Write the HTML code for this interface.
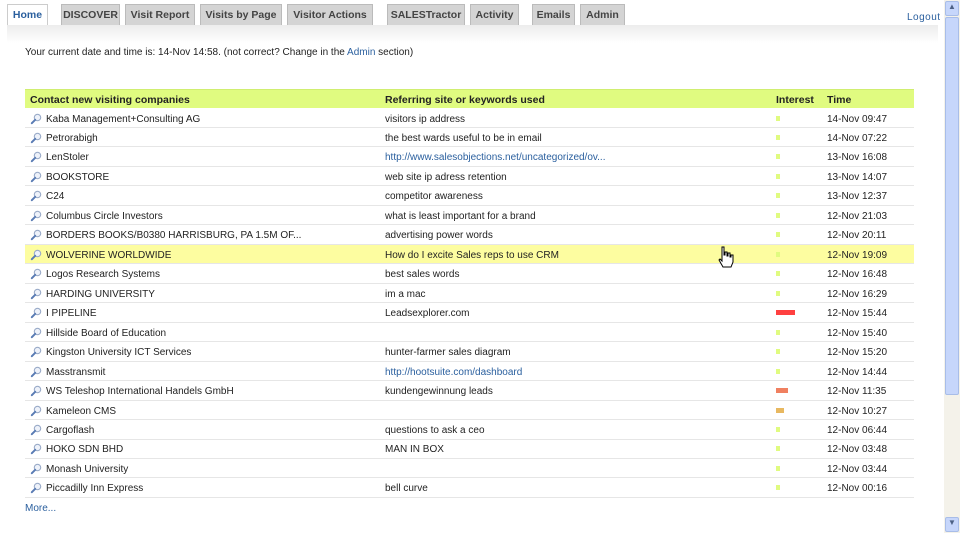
<!DOCTYPE html>
<html><head><meta charset="utf-8"><style>
*{margin:0;padding:0;box-sizing:border-box}
body{width:960px;height:533px;background:#fff;font-family:"Liberation Sans",Arial,sans-serif;font-size:10px;color:#222;position:relative;overflow:hidden}
.tab{position:absolute;top:4px;height:21px;background:#d4d4d4;border:1px solid #bbb;border-bottom:none;font-weight:bold;font-size:10.5px;color:#444;text-align:center;line-height:21px}
.tab.home{background:#fff;color:#2a5f9e;border-color:#ccc}
.band{position:absolute;left:7px;top:25px;width:931px;height:18px;background:linear-gradient(#ececec,#fff)}
a{color:#2a5f9e;text-decoration:none}
.row{position:absolute;left:25px;width:889px;height:19.5px;border-bottom:1px solid #e6e6e6;line-height:21px}
.row span{position:absolute;white-space:nowrap}
.hdr{position:absolute;left:25px;top:89px;width:889px;height:19px;background:#e0fb80;border-top:1px solid #d0ee70;font-weight:bold;font-size:10.5px;line-height:20px}
.hdr span{position:absolute}
.bar{position:absolute;top:7px;height:5px}
.ic{position:absolute;left:5px;top:4px;width:12px;height:12px}
</style></head><body>
<div class="tab home" style="left:7px;width:41px">Home</div>
<div class="tab" style="left:61px;width:59px">DISCOVER</div>
<div class="tab" style="left:125px;width:70px">Visit Report</div>
<div class="tab" style="left:200px;width:82px">Visits by Page</div>
<div class="tab" style="left:287px;width:86px">Visitor Actions</div>
<div class="tab" style="left:387px;width:78px">SALESTractor</div>
<div class="tab" style="left:470px;width:49px">Activity</div>
<div class="tab" style="left:532px;width:43px">Emails</div>
<div class="tab" style="left:580px;width:45px">Admin</div>
<a style="position:absolute;left:907px;top:12px;font-size:10px;letter-spacing:.5px">Logout</a>
<div class="band"></div>
<div style="position:absolute;left:25px;top:47px">Your current date and time is: 14-Nov 14:58. (not correct? Change in the <a>Admin</a> section)</div>
<div class="hdr"><span style="left:5px">Contact new visiting companies</span><span style="left:360px">Referring site or keywords used</span><span style="left:751px">Interest</span><span style="left:802px">Time</span></div>
<div id="rows"></div>
<a style="position:absolute;left:25px;top:503px">More...</a>
<div style="position:absolute;left:944px;top:0;width:16px;height:533px;background:#f4f2ea"></div>
<div style="position:absolute;left:945px;top:1px;width:14px;height:15px;background:#c6d6fb;border:1px solid #a8bde8;border-radius:2px;font-size:8px;text-align:center;color:#4d6185">&#9650;</div>
<div style="position:absolute;left:945px;top:17px;width:14px;height:378px;background:#c6d6fb;border:1px solid #a8bde8;border-radius:2px"></div>
<div style="position:absolute;left:945px;top:517px;width:14px;height:15px;background:#c6d6fb;border:1px solid #a8bde8;border-radius:2px;font-size:8px;text-align:center;color:#4d6185">&#9660;</div>
<svg style="position:absolute;left:718px;top:246px" width="16" height="22" viewBox="0 0 16 22"><path d="M4 1h2v8h1V6h2v4h1V7h2v4h1V9h2v7l-2 5H5L1 14l1-1 2 2z" fill="#fff" stroke="#000" stroke-width="1"/></svg>
<script>
var d=[["Kaba Management+Consulting AG","visitors ip address",0,"14-Nov 09:47"],
["Petrorabigh","the best wards useful to be in email",0,"14-Nov 07:22"],
["LenStoler","http://www.salesobjections.net/uncategorized/ov...",0,"13-Nov 16:08",1],
["BOOKSTORE","web site ip adress retention",0,"13-Nov 14:07"],
["C24","competitor awareness",0,"13-Nov 12:37"],
["Columbus Circle Investors","what is least important for a brand",0,"12-Nov 21:03"],
["BORDERS BOOKS/B0380 HARRISBURG, PA 1.5M OF...","advertising power words",0,"12-Nov 20:11"],
["WOLVERINE WORLDWIDE","How do I excite Sales reps to use CRM",0,"12-Nov 19:09"],
["Logos Research Systems","best sales words",0,"12-Nov 16:48"],
["HARDING UNIVERSITY","im a mac",0,"12-Nov 16:29"],
["I PIPELINE","Leadsexplorer.com",1,"12-Nov 15:44"],
["Hillside Board of Education","",0,"12-Nov 15:40"],
["Kingston University ICT Services","hunter-farmer sales diagram",0,"12-Nov 15:20"],
["Masstransmit","http://hootsuite.com/dashboard",0,"12-Nov 14:44",1],
["WS Teleshop International Handels GmbH","kundengewinnung leads",2,"12-Nov 11:35"],
["Kameleon CMS","",3,"12-Nov 10:27"],
["Cargoflash","questions to ask a ceo",0,"12-Nov 06:44"],
["HOKO SDN BHD","MAN IN BOX",0,"12-Nov 03:48"],
["Monash University","",0,"12-Nov 03:44"],
["Piccadilly Inn Express","bell curve",0,"12-Nov 00:16"]];
var bars=[["#e0fb80",4],["#ff4040",19],["#f08060",12],["#e8b860",8]];
var h="";
d.forEach(function(r,i){var t=108.5+i*19.47;var b=bars[r[2]];
h+='<div class="row" style="top:'+t+'px;'+(i==7?'background:#fdfda0;':'')+'">'+
'<svg class="ic" viewBox="0 0 12 12"><circle cx="7.5" cy="4.5" r="3.2" fill="#eef2fa" stroke="#9aabc8" stroke-width="1.1"/><path d="M5.2 6.8L1.8 10.2" stroke="#5a7cb4" stroke-width="2" stroke-linecap="round"/></svg>'+
'<span style="left:21px">'+r[0]+'</span><span style="left:360px'+(r[4]?';color:#2a5f9e':'')+'">'+r[1]+'</span>'+
'<div class="bar" style="left:751px;width:'+b[1]+'px;background:'+b[0]+'"></div>'+
'<span style="left:802px">'+r[3]+'</span></div>';});
document.getElementById("rows").innerHTML=h;
</script>
</body></html>
